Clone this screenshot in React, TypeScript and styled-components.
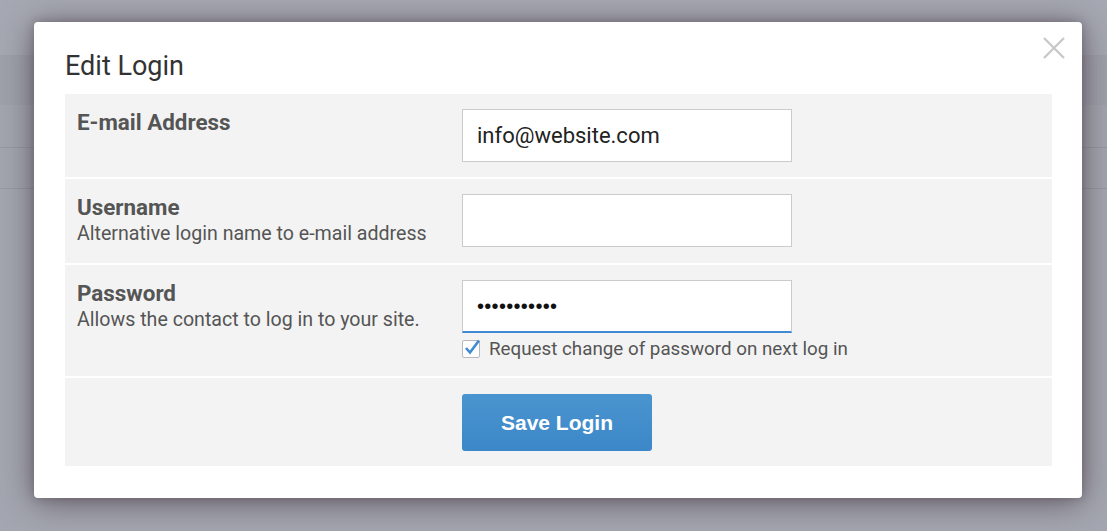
import React from "react";
import styled, { createGlobalStyle } from "styled-components";

const GlobalStyle = createGlobalStyle`
  html, body {
    margin: 0;
    padding: 0;
    background: #a4a7b1;
    font-family: Roboto, "Liberation Sans", Arial, sans-serif;
  }
  * { box-sizing: border-box; }
`;

const Screen = styled.div`
  position: relative;
  width: 1107px;
  height: 531px;
  overflow: hidden;
  background: #a4a7b1;
`;

// faint page behind the overlay
const PageBehind = styled.div`
  display: flex;
  flex-direction: column;
`;

const PageBand = styled.div<{ $h: number; $bg: string; $line?: boolean }>`
  height: ${(p) => p.$h}px;
  background: ${(p) => p.$bg};
  border-bottom: ${(p) => (p.$line ? "1px solid #979aa4" : "none")};
`;

const Overlay = styled.div`
  position: absolute;
  inset: 0;
  padding: 22px 25px 0 34px;
`;

const Modal = styled.div`
  position: relative;
  background: #fff;
  border-radius: 4px;
  padding: 28px 30px 32px 31px;
  box-shadow: 0 4px 34px rgba(45, 25, 35, 0.55), 0 0 10px rgba(45, 25, 35, 0.25);
`;

const Title = styled.h2`
  margin: 0 0 12px;
  font-size: 27px;
  line-height: 32px;
  font-weight: 400;
  color: #333;
`;

const CloseButton = styled.button`
  position: absolute;
  top: 13px;
  right: 15px;
  width: 26px;
  height: 26px;
  padding: 0;
  border: 0;
  background: none;
  cursor: pointer;
`;

const Table = styled.div`
  display: flex;
  flex-direction: column;
  gap: 2px;
`;

const Row = styled.div<{ $pt?: number; $pb?: number }>`
  display: grid;
  grid-template-columns: 397px 1fr;
  background: #f3f3f3;
  padding: ${(p) => p.$pt ?? 15}px 0 ${(p) => p.$pb ?? 15}px;
`;

const LabelCell = styled.div`
  padding: 0 12px;
`;

const Label = styled.div`
  font-size: 22.4px;
  line-height: 26px;
  font-weight: 700;
  color: #555;
`;

const Hint = styled.div`
  font-size: 19.6px;
  line-height: 28px;
  color: #555;
`;

const FieldCell = styled.div`
  display: flex;
  flex-direction: column;
`;

const Input = styled.input<{ $focus?: boolean }>`
  width: 330px;
  height: 53px;
  padding: 0 14px;
  border: 1px solid #cbcbcb;
  border-bottom: ${(p) => (p.$focus ? "2px solid #3f8ad2" : "1px solid #cbcbcb")};
  background: #fff;
  font-family: Roboto, "Liberation Sans", Arial, sans-serif;
  font-size: 22px;
  color: #222;
  outline: none;
  border-radius: 0;
`;

const PasswordInput = styled(Input)`
  font-family: "Liberation Sans", Arial, sans-serif;
  font-size: 20px;
  letter-spacing: 0.3px;
  color: #111;
`;

const CheckRow = styled.label`
  display: flex;
  align-items: center;
  gap: 9px;
  margin-top: 4px;
  font-size: 18.8px;
  line-height: 24px;
  color: #555;
`;

const CheckBox = styled.span`
  position: relative;
  display: block;
  width: 18px;
  height: 18px;
  border: 1px solid #b9b9b9;
  border-radius: 2px;
  background: #fff;

  svg {
    position: absolute;
    left: 1px;
    top: -2px;
    overflow: visible;
  }
`;

const SaveButton = styled.button`
  width: 190px;
  height: 57px;
  border: 0;
  border-radius: 3px;
  background: linear-gradient(#4a94cf, #3c87c8);
  color: #fff;
  font-family: "Liberation Sans", Arial, sans-serif;
  font-size: 21px;
  font-weight: 700;
  cursor: pointer;
`;

const App = () => {
  return (
    <Screen>
      <GlobalStyle />
      <PageBehind>
        <PageBand $h={55} $bg="#a6a9b3" />
        <PageBand $h={50} $bg="#9fa2ac" />
        <PageBand $h={43} $bg="#a3a6b0" $line />
        <PageBand $h={41} $bg="#a3a6b0" $line />
      </PageBehind>
      <Overlay>
        <Modal>
          <CloseButton aria-label="Close">
            <svg width="26" height="26" viewBox="0 0 26 26">
              <path d="M3 3 L23 23 M23 3 L3 23" stroke="#c9c9c9" strokeWidth="2.4" />
            </svg>
          </CloseButton>
          <Title>Edit Login</Title>
          <Table>
            <Row>
              <LabelCell>
                <Label>E-mail Address</Label>
              </LabelCell>
              <FieldCell>
                <Input defaultValue="info@website.com" />
              </FieldCell>
            </Row>
            <Row>
              <LabelCell>
                <Label>Username</Label>
                <Hint>Alternative login name to e-mail address</Hint>
              </LabelCell>
              <FieldCell>
                <Input defaultValue="" />
              </FieldCell>
            </Row>
            <Row>
              <LabelCell>
                <Label>Password</Label>
                <Hint>Allows the contact to log in to your site.</Hint>
              </LabelCell>
              <FieldCell>
                <PasswordInput $focus type="password" defaultValue="secretpass1" />
                <CheckRow>
                  <CheckBox>
                    <svg width="16" height="16" viewBox="0 0 16 16">
                      <path d="M2 9 L6 13.5 L15 1.5" fill="none" stroke="#3f8ad2" strokeWidth="2.6" />
                    </svg>
                  </CheckBox>
                  Request change of password on next log in
                </CheckRow>
              </FieldCell>
            </Row>
            <Row $pt={16} $pb={15}>
              <div />
              <FieldCell>
                <SaveButton>Save Login</SaveButton>
              </FieldCell>
            </Row>
          </Table>
        </Modal>
      </Overlay>
    </Screen>
  );
};

export default App;
